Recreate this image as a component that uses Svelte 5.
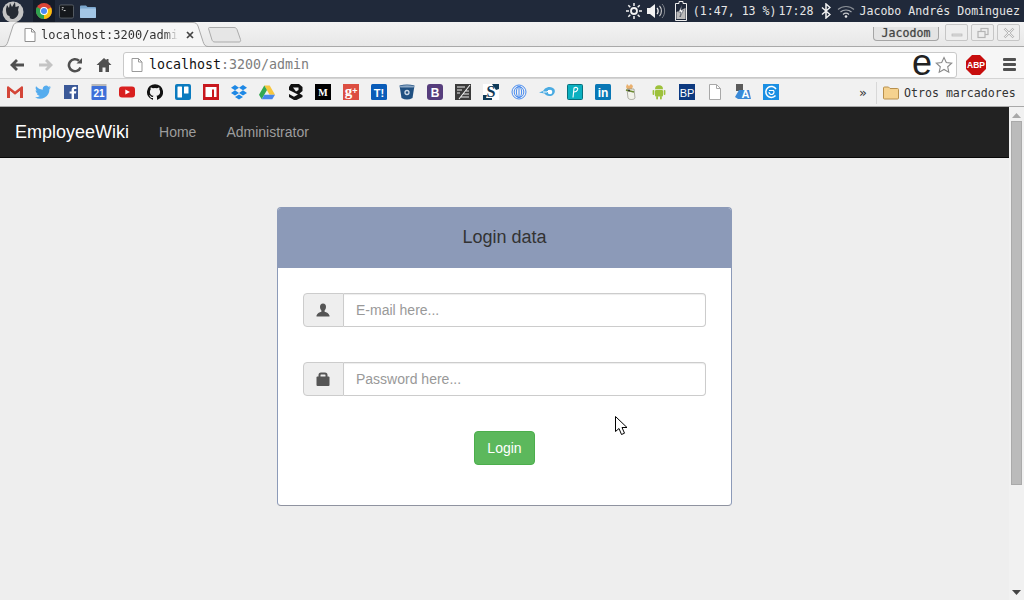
<script lang="ts">
  const navLinks = ['Home', 'Administrator'];
</script>

<div class="screen">
  <!-- desktop panel -->
  <header class="panel">
    <div class="panel-left">
      <div class="logo-wrap">
        <svg viewBox="0 0 22 22" width="22" height="22">
          <circle cx="11" cy="12" r="10.500" fill="#c4c4c4" />
          <path d="M4 9l1-4 2 3 1-5 2 4 3-5 .5 5 3.500-1-1 4c1.500 3-.5 8-5 9-2.500.3-3.500-1-3.500-3-2.500 0-3.500-3-3.500-7z" fill="#262b33" />
        </svg>
      </div>
      <div class="launcher active">
        <svg viewBox="0 0 16 16" width="16" height="16">
          <circle cx="8" cy="8" r="8" fill="#db4437" />
          <path d="M8 8L15 4.500A8 8 0 0 1 8 16z" fill="#f4c20d" />
          <path d="M8 8L8 16A8 8 0 0 1 1 4z" fill="#2fa14f" />
          <circle cx="8" cy="8" r="3.900" fill="#fff" />
          <circle cx="8" cy="8" r="3" fill="#4a8af4" />
        </svg>
      </div>
      <div class="launcher">
        <svg viewBox="0 0 16 16" width="15" height="15">
          <rect x="0.500" y="1" width="15" height="14" rx="1.500" fill="#15181c" stroke="#5a6068" />
          <path d="M3 4h2M3 6h1M5 7h2" stroke="#e8e8e8" stroke-width="1" />
        </svg>
      </div>
      <div class="launcher">
        <svg viewBox="0 0 16 16" width="16" height="16">
          <path d="M0 3.500a1 1 0 0 1 1-1h5l1.500 1.500H15a1 1 0 0 1 1 1V14a1 1 0 0 1-1 1H1a1 1 0 0 1-1-1z" fill="#7ba7cf" />
          <rect x="0" y="5.500" width="16" height="9.500" rx="1" fill="#a3c6e6" />
        </svg>
      </div>
    </div>
    <div class="panel-right">
      <svg viewBox="0 0 16 16" width="16" height="16" class="sun">
        <circle cx="8" cy="8" r="3" fill="none" stroke="#f2f2f2" stroke-width="1.800" />
        <path d="M8 0v3M8 13v3M0 8h3M13 8h3M2.300 2.300l2 2M11.700 11.700l2 2M2.300 13.700l2-2M11.700 4.300l2-2" stroke="#f2f2f2" stroke-width="1.500" />
      </svg>
      <svg viewBox="0 0 19 16" width="19" height="16" class="vol">
        <path d="M0 5h3l5-4v14l-5-4H0z" fill="#f2f2f2" />
        <path d="M10 5c1.500 1.500 1.500 4.500 0 6" stroke="#f2f2f2" stroke-width="1.300" fill="none" />
        <path d="M12.500 3c2.500 2.500 2.500 7.500 0 10" stroke="#d0d0d0" stroke-width="1.100" fill="none" />
        <path d="M15 1c3.500 3.500 3.500 10.500 0 14" stroke="#7d828a" stroke-width="1" fill="none" />
      </svg>
      <svg viewBox="0 0 12 20" width="12" height="20" class="bat">
        <path d="M4 0.500h4v2h3.500v17H.5v-17H4z" fill="#20293a" stroke="#eee" />
        <path d="M1.500 18V11l9-4v11z" fill="#bbb" />
        <path d="M7 4L3.500 11H6l-1 5 3.500-7H6z" fill="#fff" stroke="#20293a" stroke-width=".5" />
      </svg>
      <span class="status batt">(1:47, 13 %)</span>
      <span class="status clock">17:28</span>
      <svg viewBox="0 0 10 16" width="10" height="16" class="bt">
        <path d="M1 4.500l8 7-4 3.500V1l4 3.500-8 7" fill="none" stroke="#f2f2f2" stroke-width="1.500" />
      </svg>
      <svg viewBox="0 0 18 13" width="18" height="13" class="wifi">
        <path d="M1 4.500c4.500-4 11.500-4 16 0" fill="none" stroke="#8a8f96" stroke-width="1.200" />
        <path d="M3.500 7c3-2.700 8-2.700 11 0" fill="none" stroke="#a8acb2" stroke-width="1.200" />
        <path d="M6 9.500c1.700-1.500 4.300-1.500 6 0" fill="none" stroke="#c8cacd" stroke-width="1.200" />
        <circle cx="9" cy="11.500" r="1.300" fill="#e8e8e8" />
      </svg>
      <span class="status user">Jacobo Andrés Dominguez</span>
    </div>
  </header>

  <!-- browser chrome -->
  <div class="tabstrip">
    <div class="tab">
      <svg class="tab-shape" viewBox="0 0 210 25" width="210" height="25">
        <path d="M0 24.500h3c3 0 4-2 5-5L13 4c1-2 2-3.500 5-3.500h175c3 0 4 1.500 5 3.500l5 15.500c1 3 2 5 5 5h2" fill="#f6f6f6" stroke="#a9a9a9" />
      </svg>
      <svg class="page-icon" viewBox="0 0 12 14" width="12" height="14">
        <path d="M1 .5h6.500l3.500 3.500v9.500H1z" fill="#fff" stroke="#8e8e8e" />
        <path d="M7.500.5V4H11" fill="none" stroke="#8e8e8e" />
      </svg>
      <span class="tab-title">localhost:3200/admin</span>
      <svg class="tab-close" viewBox="0 0 8 8" width="8" height="8">
        <path d="M1 1l6 6M7 1L1 7" stroke="#444" stroke-width="1.700" />
      </svg>
    </div>
    <svg class="newtab" viewBox="0 0 34 16" width="34" height="16">
      <path d="M.5 1.500c0-1 .5-1 1.500-1h24c2 0 2.500 1 3 2l3.500 10c.4 1.500 0 2.500-1.500 2.500H7c-2 0-2.500-1-3-2z" fill="#e6e6e6" stroke="#ababab" />
    </svg>
    <div class="spacer"></div>
    <div class="profile">Jacodom</div>
    <div class="winbtns">
      <div class="winbtn"><svg viewBox="0 0 12 12" width="12" height="12"><rect x="1" y="7" width="10" height="2" fill="#ddd" stroke="#b5b5b5" stroke-width=".7" /></svg></div>
      <div class="winbtn"><svg viewBox="0 0 12 12" width="12" height="12"><rect x="4" y="1.500" width="7" height="6" fill="none" stroke="#b5b5b5" stroke-width="1.200" /><rect x="1" y="4.500" width="7" height="6" fill="#eee" stroke="#b5b5b5" stroke-width="1.200" /></svg></div>
      <div class="winbtn"><svg viewBox="0 0 12 12" width="12" height="12"><path d="M1.500 1.500l9 9M10.500 1.500l-9 9" stroke="#b5b5b5" stroke-width="2.400" /><path d="M1.500 1.500l9 9M10.500 1.500l-9 9" stroke="#efefef" stroke-width="1" /></svg></div>
    </div>
  </div>

  <div class="toolbar">
    <svg class="tool" viewBox="0 0 16 16" width="16" height="16"><path d="M15 8H4M8 3L3 8l5 5" fill="none" stroke="#505050" stroke-width="2.800" /></svg>
    <svg class="tool" viewBox="0 0 16 16" width="16" height="16"><path d="M1 8h11M8 3l5 5-5 5" fill="none" stroke="#c4c4c4" stroke-width="2.800" /></svg>
    <svg class="tool" viewBox="0 0 16 16" width="16" height="16"><path d="M13.500 10.500A6 6 0 1 1 12 3.800" fill="none" stroke="#505050" stroke-width="2.600" /><path d="M9.500 6.500H15V1z" fill="#505050" /></svg>
    <svg class="tool" viewBox="0 0 16 16" width="16" height="16"><path d="M8 1L0.500 8H3v7h3.500v-4.500h3V15H13V8h2.500L12.500 5V2h-2v1.200z" fill="#505050" /></svg>
    <div class="omnibox">
      <svg class="page-icon" viewBox="0 0 12 14" width="12" height="14">
        <path d="M1 .5h6.500l3.500 3.500v9.500H1z" fill="#fff" stroke="#9a9a9a" />
        <path d="M7.500.5V4H11" fill="none" stroke="#9a9a9a" />
      </svg>
      <span class="url"><span class="url-host">localhost</span>:3200/admin</span>
      <span class="ext-e">e</span>
      <svg class="star" viewBox="0 0 18 18" width="18" height="18"><path d="M9 1.500l2.300 5 5.400.6-4 3.700 1.100 5.400L9 13.500l-4.800 2.700 1.100-5.400-4-3.700 5.400-.6z" fill="#fff" stroke="#8a8a8a" stroke-width="1.100" /></svg>
    </div>
    <svg class="abp" viewBox="0 0 20 20" width="20" height="20">
      <path d="M6 0h8l6 6v8l-6 6H6l-6-6V6z" fill="#c70d0d" />
      <text x="10" y="13" text-anchor="middle" class="abp-text">ABP</text>
    </svg>
    <div class="menu"><i></i><i></i><i></i></div>
  </div>

  <div class="bookmarks">
    <div class="favs">
      <svg viewBox="0 0 16 16"><path d="M0 3v11h3V7l5 4 5-4v7h3V3l-1-1-7 5.500L1 2z" fill="#d44638" /><path d="M3 7v7h10V7l-5 4z" fill="#eee" /></svg>
      <svg viewBox="0 0 16 16"><path d="M16 3.200c-.6.300-1.200.4-1.900.5.700-.4 1.200-1 1.400-1.800-.6.400-1.300.7-2.100.8A3.300 3.300 0 0 0 7.800 5.700C5.100 5.600 2.700 4.300 1.100 2.300c-.9 1.500-.4 3.400 1 4.400-.5 0-1-.2-1.500-.4 0 1.600 1.100 3 2.600 3.300-.5.100-1 .1-1.500 0 .4 1.300 1.600 2.200 3.100 2.300A6.600 6.600 0 0 1 0 13.200 9.300 9.300 0 0 0 14.400 5c.6-.5 1.200-1.100 1.600-1.800z" fill="#55acee" /></svg>
      <svg viewBox="0 0 16 16"><rect x="1" y="1" width="14" height="14" fill="#3b5998" /><path d="M11 15V9.500h2l.3-2.200H11V6c0-.7.200-1.100 1.100-1.100h1.300v-2c-.3 0-1-.1-1.800-.1-1.800 0-3 1.100-3 3.100v1.500H6.600v2.200h2V15z" fill="#fff" /></svg>
      <svg viewBox="0 0 16 16"><rect x="0.500" y="0" width="15" height="3" fill="#b9b9b9" /><rect x="0.500" y="2" width="15" height="14" rx="1" fill="#3d6fd9" /><text x="8" y="13" text-anchor="middle" class="fav-text cal">21</text></svg>
      <svg viewBox="0 0 16 16"><rect x="0" y="2.500" width="16" height="11" rx="3" fill="#d9201f" /><path d="M6.300 5.500v5L11 8z" fill="#fff" /></svg>
      <svg viewBox="0 0 16 16"><path d="M8 .2a8 8 0 0 0-2.500 15.600c.4 0 .5-.2.500-.4v-1.400c-2.200.5-2.700-1-2.700-1-.4-.9-.9-1.200-.9-1.200-.7-.5.100-.5.100-.5.800.1 1.200.8 1.200.8.700 1.200 1.900.9 2.300.7 0-.5.300-.9.500-1.100-1.800-.2-3.600-.9-3.600-4 0-.9.300-1.600.8-2.100 0-.2-.3-1 .1-2.100 0 0 .7-.2 2.200.8a7.600 7.600 0 0 1 4 0c1.500-1 2.200-.8 2.200-.8.400 1.100.2 1.900.1 2.100.5.500.8 1.200.8 2.100 0 3.100-1.900 3.800-3.700 4 .3.200.6.700.6 1.500v2.200c0 .2.100.5.600.4A8 8 0 0 0 8 .2z" fill="#111" /></svg>
      <svg viewBox="0 0 16 16"><rect width="16" height="16" rx="2" fill="#0b7bbf" /><rect x="2.500" y="2.500" width="4.500" height="11" rx=".6" fill="#fff" /><rect x="9" y="2.500" width="4.500" height="7" rx=".6" fill="#fff" /></svg>
      <svg viewBox="0 0 16 16"><rect width="16" height="16" fill="#c8181e" /><path d="M2.500 13V3h11v10h-2.500V5.500H9V13z" fill="#fff" /><rect x="5" y="5.500" width="1.800" height="7.500" fill="#fff" /></svg>
      <svg viewBox="0 0 16 16"><path d="M4 1L0 3.700l4 2.600-4 2.600 4 2.700 4-2.700 4 2.700 4-2.700-4-2.600 4-2.600L12 1 8 3.700zM8 3.700l4 2.600-4 2.600-4-2.600zM4 13l4 2.600 4-2.600-4-2.600z" fill="#1e88e5" /></svg>
      <svg viewBox="0 0 16 16"><path d="M5.300 1.500h5.400L16 10.700h-5.400z" fill="#f7c63d" /><path d="M5.300 1.500L0 10.700l2.700 4.500L8 6z" fill="#33a852" /><path d="M2.700 15.200h10.600l2.700-4.500H5.400z" fill="#4787ed" /></svg>
      <svg viewBox="0 0 16 16"><path d="M4 0h8l3.500 3v4l-3 2.500 3 1.800V13l-6 3H7l-5-3v-3l5 2.800 4-2.200L2 6V3z" fill="#111" /><path d="M6 3.500h5.500V6L9 7.500z" fill="#eee" /></svg>
      <svg viewBox="0 0 16 16"><rect width="16" height="16" fill="#000" /><text x="8" y="12" text-anchor="middle" class="fav-text med">M</text></svg>
      <svg viewBox="0 0 16 16"><rect width="16" height="16" fill="#dc4e41" /><text x="5.500" y="12" text-anchor="middle" class="fav-text gp">g</text><text x="12" y="10" text-anchor="middle" class="fav-text gplus">+</text></svg>
      <svg viewBox="0 0 16 16"><rect width="16" height="16" rx="1.500" fill="#0a5cb8" /><text x="8" y="12.500" text-anchor="middle" class="fav-text tb">T!</text></svg>
      <svg viewBox="0 0 16 16"><path d="M.5 1.500Q8-.5 15.500 1.500L13.500 14q-5.500 3-11 0z" fill="#205081" /><path d="M1 2q7-1.500 14 0l-.3 1.500H1.300z" fill="#8aa6c4" /><circle cx="8" cy="8.500" r="2" fill="none" stroke="#cfdbe7" stroke-width="1.300" /></svg>
      <svg viewBox="0 0 16 16"><rect width="16" height="16" rx="3" fill="#563d7c" /><text x="8" y="12.500" text-anchor="middle" class="fav-text bs">B</text></svg>
      <svg viewBox="0 0 16 16"><rect width="16" height="16" fill="#3b3b3b" /><path d="M2 3h8M2 6h5M2 9h3M6 13h8M8 10h6M10 7h4M15 1L4 15" stroke="#eee" stroke-width="1.100" /></svg>
      <svg viewBox="0 0 16 16"><rect width="16" height="16" fill="#fff" /><path d="M9 0h7v5l-3 1zM0 11l4 0-1 3 6 0v2H0z" fill="#0f3a57" /><text x="8" y="13" text-anchor="middle" class="fav-text slash">S</text></svg>
      <svg viewBox="0 0 16 16"><g fill="none" stroke="#4a8df0" stroke-width="1"><circle cx="8" cy="8" r="7" /><ellipse cx="8" cy="8" rx="4.800" ry="5.500" /><ellipse cx="8" cy="8" rx="2.600" ry="5.500" /><path d="M8 2.500v11" /></g></svg>
      <svg viewBox="0 0 16 16"><path d="M0 8.500l4-1.500 2-2.500c3-2.500 8-2 9.500 1 1.200 3-1 6.500-5 6.500-2.500 0-4-1-5-2.500z" fill="#4aabe2" /><path d="M4 8h4l2-2" stroke="#fff" stroke-width="1" fill="none" /><circle cx="11" cy="8" r="2.300" fill="#fff" /></svg>
      <svg viewBox="0 0 16 16"><rect x=".5" y=".5" width="15" height="15" rx="1" fill="#0bb0c0" stroke="#08707c" /><path d="M6 13.500L7 4c2.500-1.500 4.500 0 3.500 2S8 8 7 8" fill="none" stroke="#fff" stroke-width="1.100" /></svg>
      <svg viewBox="0 0 16 16"><rect width="16" height="16" rx="1.500" fill="#0977b5" /><text x="8" y="13" text-anchor="middle" class="fav-text li">in</text></svg>
      <svg viewBox="0 0 16 16"><path d="M3 3l1-3 2 2 2-2 2 2-1 3H4z" fill="#eab06e" /><path d="M4 5h7l1 9c-1 2-6 2-7 0z" fill="#f2f2ea" stroke="#8f8f83" stroke-width=".7" /><path d="M3 6l8 2" stroke="#6b8a30" stroke-width="1.800" /><circle cx="6" cy="6.500" r="1" fill="#333" /></svg>
      <svg viewBox="0 0 16 16"><g fill="#9dc13b"><path d="M4 5.200a4 4 0 0 1 8 0z" /><rect x="4" y="6" width="8" height="6.500" rx="1" /><rect x="1.600" y="6" width="1.700" height="5" rx=".8" /><rect x="12.700" y="6" width="1.700" height="5" rx=".8" /><rect x="5.200" y="12" width="1.800" height="3.500" rx=".8" /><rect x="9" y="12" width="1.800" height="3.500" rx=".8" /></g></svg>
      <svg viewBox="0 0 16 16"><rect width="16" height="16" fill="#0d3a80" /><text x="8" y="12.500" text-anchor="middle" class="fav-text bp">BP</text></svg>
      <svg viewBox="0 0 16 16"><path d="M2.500.5h7l4 4v11h-11z" fill="#fff" stroke="#a8a8a8" /><path d="M9.500.5v4h4" fill="none" stroke="#a8a8a8" /></svg>
      <svg viewBox="0 0 16 16"><path d="M1 0h7v7H1z" fill="#5a5a5a" /><path d="M0 13l4-7h10l2 9H3z" fill="#3a8ad8" /><text x="10.500" y="14" text-anchor="middle" class="fav-text tr">A</text></svg>
      <svg viewBox="0 0 16 16"><rect width="16" height="16" fill="#1a8fe3" /><path d="M12.500 11.500a5.500 5.500 0 1 1 .5-6.500" fill="none" stroke="#fff" stroke-width="1.500" /><path d="M6 8a2.500 2.500 0 1 0 4.500-1.500H6" fill="none" stroke="#fff" stroke-width="1.200" /></svg>
    </div>
    <span class="more">»</span>
    <div class="others">
      <svg viewBox="0 0 16 14" width="16" height="14"><path d="M.5 2a1 1 0 0 1 1-1h4l1.500 1.500h7.500a1 1 0 0 1 1 1V12a1 1 0 0 1-1 1h-13a1 1 0 0 1-1-1z" fill="#f5d28f" stroke="#b8904e" /></svg>
      <span>Otros marcadores</span>
    </div>
  </div>

  <!-- page -->
  <div class="viewport">
    <div class="page">
      <nav class="navbar">
        <span class="brand">EmployeeWiki</span>
        <ul class="nav">
          {#each navLinks as link}
            <li>{link}</li>
          {/each}
        </ul>
      </nav>

      <main class="content">
        <section class="login">
          <h3 class="login-head">Login data</h3>
          <form class="login-body">
            <div class="input-group">
              <span class="addon">
                <svg viewBox="0 0 14 14" width="14" height="14"><path d="M7 .5c2 0 3 1.300 3 3.200 0 1.700-.7 3-1.400 3.800v1.200c2 .8 4.400 1.600 4.900 3.800v1H.5v-1c.5-2.200 2.900-3 4.900-3.800V7.500C4.700 6.700 4 5.400 4 3.700 4 1.800 5 .5 7 .5z" fill="#555" /></svg>
              </span>
              <input type="text" placeholder="E-mail here..." />
            </div>
            <div class="input-group">
              <span class="addon">
                <svg viewBox="0 0 14 14" width="14" height="14"><path d="M3.500 5V3a1.500 1.500 0 0 1 1.500-1.500h4A1.500 1.500 0 0 1 10.500 3v2" fill="none" stroke="#555" stroke-width="2" /><rect x=".5" y="4.500" width="13" height="9.500" rx="1" fill="#555" /></svg>
              </span>
              <input type="password" placeholder="Password here..." />
            </div>
            <div class="actions">
              <button type="button" class="btn">Login</button>
            </div>
          </form>
        </section>
      </main>
    </div>

    <div class="scrollbar">
      <svg viewBox="0 0 9 5" width="9" height="5"><path d="M4.500 0L9 5H0z" fill="#a8a8a8" /></svg>
      <div class="thumb"></div>
      <div class="spacer"></div>
      <svg viewBox="0 0 9 5" width="9" height="5"><path d="M4.500 5L9 0H0z" fill="#444" /></svg>
    </div>

    <svg class="cursor" viewBox="0 0 13 20" width="13" height="20">
      <path d="M.5.500v15l3.500-3 2.500 6 3-1.300-2.500-5.700h5z" fill="#fff" stroke="#000" />
    </svg>
  </div>
</div>

<style>
  :global(body) {
    margin: 0;
    overflow: hidden;
  }

  .screen {
    width: 1024px;
    height: 600px;
    display: flex;
    flex-direction: column;
    overflow: hidden;
    font-family: 'Liberation Sans', Arial, sans-serif;
    background: #eee;
  }

  .spacer {
    flex: 1;
  }

  /* panel */
  .panel {
    height: 22px;
    flex: none;
    display: flex;
    justify-content: space-between;
    align-items: center;
    background: #20293a;
  }

  .panel-left {
    display: flex;
    align-items: center;
  }

  .logo-wrap {
    width: 33px;
    height: 22px;
    display: flex;
    align-items: center;
    padding-left: 2px;
    box-sizing: border-box;
  }

  .launcher {
    width: 22px;
    height: 22px;
    display: flex;
    align-items: center;
    justify-content: center;
  }

  .launcher.active {
    background: #151c29;
  }

  .panel-right {
    display: flex;
    align-items: center;
    padding-right: 4px;
  }

  .status {
    font-family: 'DejaVu Sans Mono', monospace;
    font-size: 11.600px;
    color: #e6e6e6;
    white-space: nowrap;
  }

  .sun {
    margin-right: 5px;
  }

  .vol {
    margin-right: 9px;
  }

  .bat {
    margin-right: 6px;
  }

  .batt {
    margin-right: 2px;
  }

  .bt {
    margin: 0 6px 0 8px;
  }

  .wifi {
    margin-right: 4px;
  }

  /* tabs */
  .tabstrip {
    height: 25px;
    flex: none;
    display: flex;
    align-items: flex-start;
    background: linear-gradient(#f3f3f3, #e7e7e7);
    box-shadow: inset 0 -1px 0 #a9a9a9;
  }

  .tab {
    position: relative;
    width: 210px;
    height: 25px;
    display: flex;
    align-items: center;
    padding: 1px 0 0 24px;
    box-sizing: border-box;
  }

  .tab-shape {
    position: absolute;
    left: 0;
    top: 0;
  }

  .tab .page-icon {
    position: relative;
    flex: none;
  }

  .tab-title {
    position: relative;
    margin-left: 5px;
    width: 137px;
    overflow: hidden;
    white-space: nowrap;
    font-family: 'DejaVu Sans Mono', monospace;
    font-size: 12px;
    color: #333;
    -webkit-mask-image: linear-gradient(90deg, #000 90%, transparent);
    mask-image: linear-gradient(90deg, #000 90%, transparent);
  }

  .tab-close {
    position: relative;
    margin-left: 8px;
  }

  .newtab {
    margin: 5px 0 0 -2px;
  }

  .profile {
    width: 66px;
    height: 14px;
    margin: 5px 6px 0 0;
    box-sizing: border-box;
    border: 1px solid #a5a5a5;
    border-top: 0;
    border-radius: 0 0 4px 4px;
    background: #e4e4e4;
    text-align: center;
    font-family: 'DejaVu Sans Mono', monospace;
    font-size: 11.600px;
    line-height: 12px;
    color: #444;
    text-shadow: 0 0 1px #888;
  }

  .winbtns {
    display: flex;
    gap: 3px;
    margin: 2px 4px 0 0;
  }

  .winbtn {
    width: 23px;
    height: 17px;
    box-sizing: border-box;
    border: 1px solid #c6c6c6;
    border-radius: 2px;
    display: flex;
    align-items: center;
    justify-content: center;
    background: #eee;
  }

  /* toolbar */
  .toolbar {
    height: 31px;
    flex: none;
    display: flex;
    align-items: center;
    background: #f6f6f6;
    padding: 4px 0 0 9px;
    box-sizing: border-box;
  }

  .tool {
    margin-right: 13px;
    flex: none;
  }

  .toolbar .tool:nth-child(4) {
    margin-right: 11px;
  }

  .omnibox {
    width: 834px;
    height: 26px;
    flex: none;
    box-sizing: border-box;
    border: 1px solid #c9c9c9;
    border-radius: 3px;
    background: #fff;
    display: flex;
    align-items: center;
    padding-left: 7px;
  }

  .url {
    margin-left: 6px;
    font-family: 'DejaVu Sans Mono', monospace;
    font-size: 13.300px;
    color: #7d7d7d;
    flex: 1;
  }

  .url-host {
    color: #111;
  }

  .ext-e {
    font-family: 'Liberation Sans', Arial, sans-serif;
    font-size: 36px;
    line-height: 24px;
    color: #222;
    margin-top: -4px;
    margin-right: 3px;
  }

  .star {
    margin-right: 3px;
  }

  .abp {
    margin-left: 9px;
    flex: none;
  }

  .abp-text {
    font-family: 'Liberation Sans', Arial, sans-serif;
    font-size: 8.500px;
    font-weight: 700;
    fill: #fff;
  }

  .menu {
    margin-left: 17px;
    display: flex;
    flex-direction: column;
    gap: 2px;
  }

  .menu i {
    display: block;
    width: 13px;
    height: 3px;
    background: #505050;
    border-radius: 1px;
  }

  /* bookmarks */
  .bookmarks {
    height: 29px;
    flex: none;
    display: flex;
    align-items: center;
    background: #f1f1f1;
    border-top: 1px solid #d4d4d4;
    border-bottom: 1px solid #a9a9a9;
    box-sizing: border-box;
    padding-left: 7px;
  }

  .favs {
    display: flex;
    gap: 12px;
    width: 850px;
    flex: none;
    margin-bottom: 2px;
  }

  .favs svg {
    width: 16px;
    height: 16px;
    flex: none;
  }

  .fav-text {
    font-family: 'Liberation Sans', Arial, sans-serif;
    font-weight: 700;
    fill: #fff;
  }

  .cal {
    font-size: 10px;
  }

  .med {
    font-family: 'Liberation Serif', serif;
    font-size: 10px;
  }

  .gp {
    font-family: 'Liberation Serif', serif;
    font-size: 15px;
  }

  .gplus {
    font-size: 9px;
  }

  .tb {
    font-size: 11px;
  }

  .bs {
    font-size: 12px;
  }

  .li {
    font-size: 12px;
  }

  .bp {
    font-size: 11px;
    font-weight: 400;
  }

  .tr {
    font-size: 11px;
  }

  .fav-text.slash {
    font-family: 'Liberation Serif', serif;
    font-size: 16px;
    fill: #0f3a57;
  }

  .more {
    margin-left: 2px;
    font-family: 'DejaVu Sans', sans-serif;
    font-size: 13px;
    color: #333;
    width: 17px;
    flex: none;
  }

  .others {
    height: 22px;
    display: flex;
    align-items: center;
    border-left: 1px solid #d8d8d8;
    padding-left: 6px;
    gap: 5px;
    font-family: 'DejaVu Sans Mono', monospace;
    font-size: 11.600px;
    color: #333;
    white-space: nowrap;
  }

  /* page */
  .viewport {
    position: relative;
    flex: 1;
    display: flex;
    min-height: 0;
  }

  .page {
    flex: 1;
    background: #eee;
  }

  .navbar {
    height: 51px;
    box-sizing: border-box;
    display: flex;
    align-items: center;
    padding: 0 15px;
    background: #222;
    border-bottom: 1px solid #080808;
  }

  .brand {
    font-size: 18px;
    color: #fff;
    margin-right: 30px;
  }

  .nav {
    display: flex;
    gap: 30px;
    list-style: none;
    margin: 0;
    padding: 0;
    font-size: 14px;
    color: #9d9d9d;
  }

  .content {
    display: flex;
    justify-content: center;
    padding-top: 49px;
  }

  .login {
    width: 455px;
    height: 299px;
    box-sizing: border-box;
    background: #fff;
    border: 1px solid #8c9ab8;
    border-bottom-color: #8f93a0;
    border-radius: 4px;
    overflow: hidden;
    color: #333;
  }

  .login-head {
    margin: 0;
    height: 60px;
    box-sizing: border-box;
    padding-bottom: 2px;
    display: flex;
    align-items: center;
    justify-content: center;
    background: #8c9ab8;
    font-size: 18px;
    font-weight: 400;
    color: #333;
  }

  .login-body {
    padding: 25px 25px 0;
    display: flex;
    flex-direction: column;
    gap: 35px;
  }

  .input-group {
    display: flex;
    height: 34px;
  }

  .addon {
    width: 41px;
    flex: none;
    box-sizing: border-box;
    display: flex;
    align-items: center;
    justify-content: center;
    padding-right: 1px;
    background: #eee;
    border: 1px solid #ccc;
    border-radius: 4px 0 0 4px;
  }

  .input-group input {
    flex: 1;
    min-width: 0;
    box-sizing: border-box;
    height: 34px;
    padding: 6px 12px;
    border: 1px solid #ccc;
    border-left: 0;
    border-radius: 0 4px 4px 0;
    background: #fff;
    font-family: inherit;
    font-size: 14px;
    box-shadow: inset 0 1px 1px rgba(0, 0, 0, 0.075);
    outline: none;
  }

  .input-group input::placeholder {
    color: #999;
    opacity: 1;
  }

  .actions {
    display: flex;
    justify-content: center;
  }

  .btn {
    width: 61px;
    height: 34px;
    background: #5cb85c;
    border: 1px solid #4cae4c;
    border-radius: 4px;
    color: #fff;
    font-family: inherit;
    font-size: 14px;
    padding: 0;
  }

  .scrollbar {
    width: 15px;
    flex: none;
    background: #f1f1f1;
    display: flex;
    flex-direction: column;
    align-items: center;
    padding: 6px 0 5px;
    box-sizing: border-box;
  }

  .thumb {
    width: 11px;
    height: 364px;
    margin-top: 3px;
    background: #bbb;
    border: 1px solid #aaa;
    box-sizing: border-box;
  }

  .cursor {
    position: absolute;
    left: 615px;
    top: 309px;
  }
</style>
